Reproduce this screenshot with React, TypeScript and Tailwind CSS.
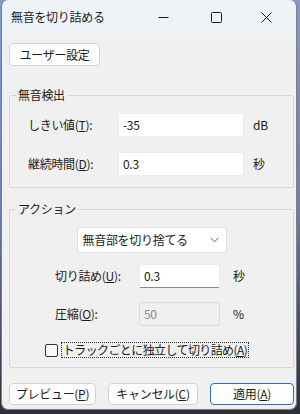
import React from 'react';

const font = { fontFamily: '"Noto Sans CJK JP", "Noto Sans", sans-serif' };

function TitleBar() {
  return (
    <div className="h-[34px] flex items-center bg-[#eef3f8] rounded-t-[7px] shrink-0">
      <span className="pl-[9px] text-[12px] leading-none text-[#1b1b1b] flex-1">無音を切り詰める</span>
      <div className="flex h-full">
        <div className="w-[53px] flex items-center justify-center">
          <svg width="11" height="11" viewBox="0 0 11 11"><path d="M0.5 5.5h10" stroke="#1b1b1b" strokeWidth="1" /></svg>
        </div>
        <div className="w-[53px] flex items-center justify-center">
          <svg width="11" height="11" viewBox="0 0 11 11"><rect x="0.5" y="0.5" width="10" height="10" rx="1" fill="none" stroke="#1b1b1b" strokeWidth="1" /></svg>
        </div>
        <div className="w-[53px] flex items-center justify-center pr-[6px]">
          <svg width="11" height="11" viewBox="0 0 11 11"><path d="M0.5 0.5l10 10M10.5 0.5l-10 10" stroke="#1b1b1b" strokeWidth="1" /></svg>
        </div>
      </div>
    </div>
  );
}

function Field({ value, disabled, underline, width }: { value: string; disabled?: boolean; underline?: boolean; width: string }) {
  return (
    <div
      className={`${width} h-[24px] flex items-center px-[4px] text-[12px] leading-none border rounded-[2px] ${
        disabled ? 'bg-[#f0f0f0] border-[#dcdcdc] text-[#8a8a8a]' : 'bg-white border-[#ececec] text-[#1b1b1b]'
      } ${underline ? 'border-b-[#8a8a8a]' : ''}`}
    >
      {value}
    </div>
  );
}

function Btn({ children, primary, width, height = 'h-[22px]' }: { children: React.ReactNode; primary?: boolean; width: string; height?: string }) {
  return (
    <div
      className={`${width} ${height} flex items-center justify-center text-[12px] leading-none text-[#1b1b1b] bg-[#fdfdfd] rounded-[4px] border ${
        primary ? 'border-[#2d6fc8]' : 'border-[#d3d3d3]'
      }`}
    >
      {children}
    </div>
  );
}

export default function App() {
  return (
    <div className="w-[300px] h-[414px] bg-gradient-to-b from-[#8497cc] via-[#6f7fae] to-[#2f2f38] pl-[1px] tracking-[-0.3px]" style={font}>
      <div className="w-[296px] h-[410px] bg-[#f0f0f0] rounded-[7px] border border-[#7d7f86] border-t-0 flex flex-col overflow-hidden">
        <TitleBar />

        <div className="flex flex-col px-[7px]">
          <div className="mt-[9px]">
            <Btn width="w-[91px]" height="h-[23px]">ユーザー設定</Btn>
          </div>

          <fieldset className="mt-[21px] border border-[#d8d8d8] rounded-[2px] w-[285px] pt-[10px] pb-[11px]">
            <legend className="ml-[6px] px-[2px] text-[12px] leading-[16px] text-[#1b1b1b]">無音検出</legend>
            <div className="flex flex-col gap-[15px] pl-[18px]">
              <div className="flex items-center">
                <span className="w-[90px] text-[12px] leading-none text-[#1b1b1b]">しきい値(<u>T</u>):</span>
                <Field width="w-[126px]" value="-35" />
                <span className="ml-[9px] text-[12px] leading-none text-[#1b1b1b]">dB</span>
              </div>
              <div className="flex items-center">
                <span className="w-[90px] text-[12px] leading-none text-[#1b1b1b]">継続時間(<u>D</u>):</span>
                <Field width="w-[126px]" value="0.3" />
                <span className="ml-[9px] text-[12px] leading-none text-[#1b1b1b]">秒</span>
              </div>
            </div>
          </fieldset>

          <fieldset className="mt-[13px] border border-[#d8d8d8] rounded-[2px] w-[285px] pt-[10px] pb-[9px]">
            <legend className="ml-[6px] px-[2px] text-[12px] leading-[16px] text-[#1b1b1b]">アクション</legend>
            <div className="flex flex-col items-center">
              <div className="w-[150px] h-[26px] bg-white border border-[#e2e2e2] rounded-[3px] flex items-center pl-[5px] pr-[7px] text-[12px] leading-none text-[#1b1b1b]">
                <span className="flex-1">無音部を切り捨てる</span>
                <svg width="9" height="6" viewBox="0 0 9 6"><path d="M0.5 0.8l4 4 4-4" fill="none" stroke="#5f5f5f" strokeWidth="1" /></svg>
              </div>
            </div>
            <div className="flex flex-col gap-[14px] mt-[11px] pl-[45px]">
              <div className="flex items-center">
                <span className="w-[84px] text-[12px] leading-none text-[#1b1b1b]">切り詰め(<u>U</u>):</span>
                <Field width="w-[81px]" value="0.3" underline />
                <span className="ml-[13px] text-[12px] leading-none text-[#1b1b1b]">秒</span>
              </div>
              <div className="flex items-center">
                <span className="w-[84px] text-[12px] leading-none text-[#1b1b1b]">圧縮(<u>O</u>):</span>
                <Field width="w-[81px]" value="50" disabled />
                <span className="ml-[13px] text-[12px] leading-none text-[#1b1b1b]">%</span>
              </div>
            </div>
            <div className="flex items-center justify-center mt-[16px] gap-[3px] pr-[9px]">
              <div className="w-[13px] h-[13px] border border-[#333] rounded-[2px] bg-[#f7f7f7]" />
              <span className="border border-dotted border-[#333] px-[1px] h-[16px] flex items-center text-[12px] leading-none tracking-[-0.6px] text-[#1b1b1b]">
                トラックごとに独立して切り詰め(<u>A</u>)
              </span>
            </div>
          </fieldset>

          <div className="flex items-center justify-between mt-[15px] w-[285px]">
            <Btn width="w-[87px]">プレビュー(<u>P</u>)</Btn>
            <Btn width="w-[90px]">キャンセル(<u>C</u>)</Btn>
            <Btn width="w-[84px]" primary>適用(<u>A</u>)</Btn>
          </div>
        </div>
      </div>
    </div>
  );
}
